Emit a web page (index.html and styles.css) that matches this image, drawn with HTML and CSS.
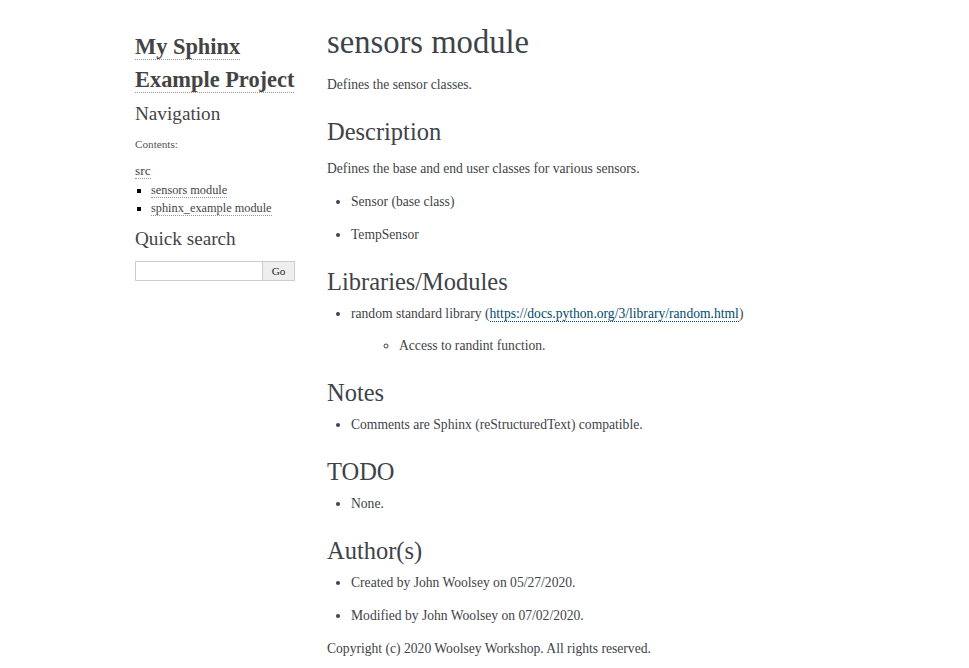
FILE: index.html
```html
<!DOCTYPE html>
<html>
<head>
<meta charset="utf-8">
<title>sensors module</title>
<link rel="stylesheet" href="styles.css">
</head>
<body>
<div class="document">
  <div class="sphinxsidebar">
    <div class="sidebarwrapper">
      <h1 class="logo"><a href="#">My Sphinx Example Project</a></h1>
      <h3>Navigation</h3>
      <p class="caption">Contents:</p>
      <ul class="toc">
        <li class="l1"><a href="#">src</a>
          <ul>
            <li class="l2"><a href="#">sensors module</a></li>
            <li class="l2"><a href="#">sphinx_example module</a></li>
          </ul>
        </li>
      </ul>
      <div class="searchbox">
        <h3>Quick search</h3>
        <form class="search">
          <input type="text" class="search-input">
          <input type="submit" class="search-go" value="Go">
        </form>
      </div>
    </div>
  </div>
  <div class="bodywrapper">
    <div class="body">
      <h1>sensors module</h1>
      <p>Defines the sensor classes.</p>
      <h2>Description</h2>
      <p>Defines the base and end user classes for various sensors.</p>
      <ul>
        <li><p>Sensor (base class)</p></li>
        <li><p>TempSensor</p></li>
      </ul>
      <h2>Libraries/Modules</h2>
      <ul>
        <li><p>random standard library (<a href="#">https://docs.python.org/3/library/random.html</a>)</p>
          <ul class="nested">
            <li><p>Access to randint function.</p></li>
          </ul>
        </li>
      </ul>
      <h2>Notes</h2>
      <ul>
        <li><p>Comments are Sphinx (reStructuredText) compatible.</p></li>
      </ul>
      <h2>TODO</h2>
      <ul>
        <li><p>None.</p></li>
      </ul>
      <h2>Author(s)</h2>
      <ul>
        <li><p>Created by John Woolsey on 05/27/2020.</p></li>
        <li><p>Modified by John Woolsey on 07/02/2020.</p></li>
      </ul>
      <p>Copyright (c) 2020 Woolsey Workshop. All rights reserved.</p>
    </div>
  </div>
</div>
</body>
</html>
```

FILE: styles.css
```css
html, body {
  margin: 0;
  padding: 0;
  background: #fff;
}
body {
  font-family: "Liberation Serif", serif;
  font-size: 13.6px;
  color: #3E4349;
}
.document {
  display: flex;
  align-items: flex-start;
  margin: 24px 0 0 127px;
  width: 752px;
}
.sphinxsidebar {
  width: 176px;
  flex: none;
  font-size: 11.2px;
  line-height: 1.5;
}
.sidebarwrapper {
  padding: 14.4px 8px;
}
.sphinxsidebar a {
  color: #444;
  text-decoration: none;
  border-bottom: 1px dotted #999;
}
.logo {
  margin: -8px 0 4px 0;
  font-size: 22.4px;
  font-weight: bold;
  line-height: 33px;
}
.logo a {
  color: #444;
}
.sphinxsidebar h3 {
  font-size: 19.2px;
  font-weight: normal;
  color: #444;
  margin: 0 0 4px 0;
  line-height: 1.5;
}
.caption {
  color: #555;
  margin: 7px 0 8px 0;
  font-size: 11.2px;
}
.toc {
  list-style: none;
  margin: 6px 0 8px 0;
  padding: 0;
  color: #000;
}
.l1 > a {
  font-size: 13.4px;
}
.toc ul {
  list-style: square;
  margin: 0 0 0 16px;
  padding: 0;
}
.l2 {
  font-size: 12.3px;
  line-height: 18px;
}
.searchbox {
  margin-top: 4px;
}
.search {
  display: flex;
  margin: 7px 0 0 0;
}
.search-input {
  width: 128px;
  height: 20px;
  box-sizing: border-box;
  border: 1px solid #ccc;
  margin: 0;
  padding: 2px;
  font-family: "Liberation Serif", serif;
  font-size: 11.2px;
}
.search-go {
  width: 32px;
  height: 20px;
  box-sizing: border-box;
  border: 1px solid #ccc;
  border-left: none;
  background: #eee;
  margin: 0;
  padding: 0;
  font-family: "Liberation Serif", serif;
  font-size: 11.2px;
  color: #222;
}
.bodywrapper {
  flex: 1;
}
.body {
  padding: 0 24px;
}
.body h1, .body h2 {
  font-weight: normal;
  color: #3E4349;
  margin: 24px 0 8px 0;
  padding: 0;
}
.body h1 {
  margin-top: 0;
  font-size: 32.64px;
}
.body h2 {
  font-size: 24.48px;
}
.body p {
  line-height: 1.4em;
  margin: 13.6px 0;
}
.body ul {
  margin: 8px 0 8px 24px;
  padding: 0;
}
.body li > p {
  margin: 0 0 13.6px 0;
}
.body ul.nested {
  margin-left: 48px;
  list-style: circle;
}
.body a {
  color: #004B6B;
  text-decoration: none;
  border-bottom: 1px dotted #004B6B;
}
```
